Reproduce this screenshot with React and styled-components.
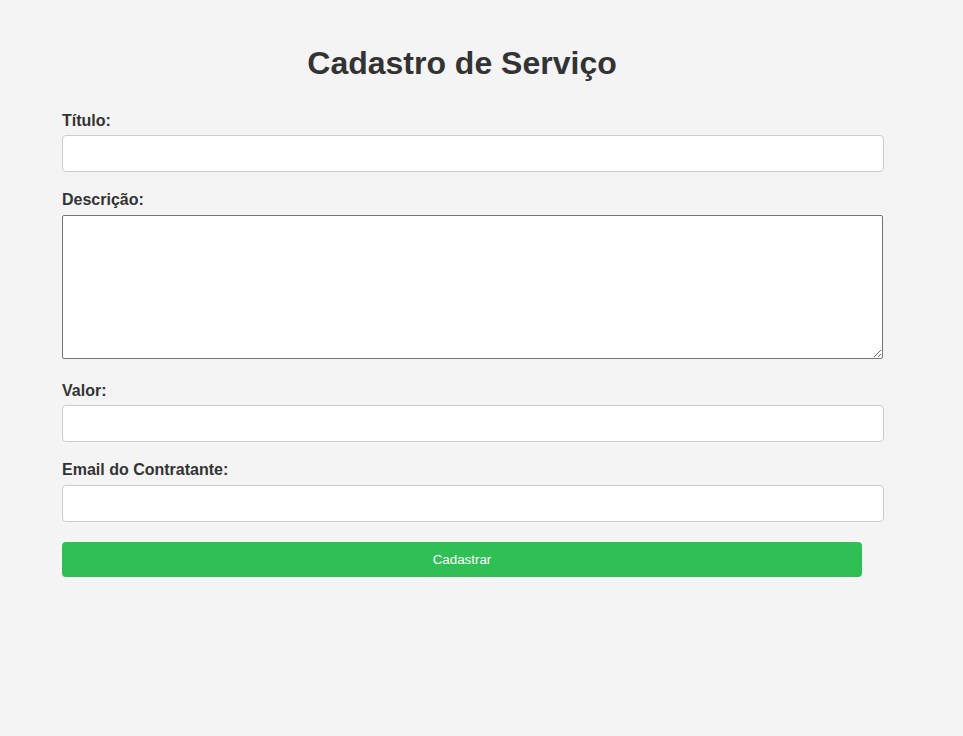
import React from "react";
import styled, { createGlobalStyle } from "styled-components";

const Global = createGlobalStyle`
  html, body { margin: 0; padding: 0; background: #f4f4f4; }
  body { font-family: "Liberation Sans", Arial, sans-serif; color: #333; }
  * { box-sizing: border-box; }
`;

const Page = styled.div`
  min-height: 736px;
  padding: 45px 0 0 62px;
`;

const Form = styled.form`
  width: 822px;
  display: flex;
  flex-direction: column;
  align-items: flex-start;
`;

const Title = styled.h1`
  width: 800px;
  margin: 0 0 30px;
  font-size: 32px;
  line-height: 37px;
  font-weight: bold;
  text-align: center;
  color: #333;
`;

const Label = styled.label`
  display: block;
  font-size: 16px;
  font-weight: bold;
  line-height: 18.4px;
  margin-bottom: 5px;
  color: #333;
`;

const Field = styled.div`
  display: flex;
  flex-direction: column;
  margin-bottom: ${(p) => p.$gap}px;
`;

const Input = styled.input`
  width: 822px;
  height: 37px;
  padding: 10px;
  border: 1px solid #ccc;
  border-radius: 4px;
  background: #fff;
  font-family: inherit;
  font-size: 14px;
  outline: none;
`;

const TextArea = styled.textarea`
  width: 821px;
  height: 144px;
  padding: 2px;
  border: 1px solid #767676;
  border-radius: 2px;
  background: #fff;
  font-family: inherit;
  outline: none;
  display: block;
`;

const Button = styled.button`
  width: 800px;
  height: 35px;
  border: none;
  border-radius: 4px;
  background: #2fbf55;
  color: #fff;
  font-family: "Liberation Sans", Arial, sans-serif;
  font-size: 13.33px;
  cursor: pointer;
`;

export default function App() {
  return (
    <>
      <Global />
      <Page>
        <Form onSubmit={(e) => e.preventDefault()}>
          <Title>Cadastro de Serviço</Title>
          <Field $gap={19}>
            <Label>Título:</Label>
            <Input type="text" />
          </Field>
          <Field $gap={23}>
            <Label>Descrição:</Label>
            <TextArea />
          </Field>
          <Field $gap={19}>
            <Label>Valor:</Label>
            <Input type="number" />
          </Field>
          <Field $gap={20}>
            <Label>Email do Contratante:</Label>
            <Input type="email" />
          </Field>
          <Button type="submit">Cadastrar</Button>
        </Form>
      </Page>
    </>
  );
}
